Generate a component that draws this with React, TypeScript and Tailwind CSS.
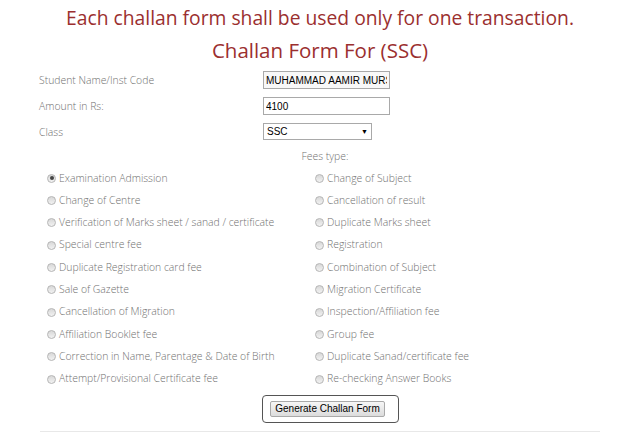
import React from "react";

const leftFees = [
  "Examination Admission",
  "Change of Centre",
  "Verification of Marks sheet / sanad / certificate",
  "Special centre fee",
  "Duplicate Registration card fee",
  "Sale of Gazette",
  "Cancellation of Migration",
  "Affiliation Booklet fee",
  "Correction in Name, Parentage & Date of Birth",
  "Attempt/Provisional Certificate fee",
];

const rightFees = [
  "Change of Subject",
  "Cancellation of result",
  "Duplicate Marks sheet",
  "Registration",
  "Combination of Subject",
  "Migration Certificate",
  "Inspection/Affiliation fee",
  "Group fee",
  "Duplicate Sanad/certificate fee",
  "Re-checking Answer Books",
];

const Radio: React.FC<{ checked?: boolean }> = ({ checked }) => (
  <span className="w-[9px] h-[9px] rounded-full border border-[#b5b5b5] bg-gradient-to-b from-[#d8d8d8] to-[#f2f2f2] flex items-center justify-center shrink-0">
    {checked && <span className="w-[4px] h-[4px] rounded-full bg-[#444]" />}
  </span>
);

const FeeItem: React.FC<{ label: string; checked?: boolean }> = ({ label, checked }) => (
  <div className="flex items-center gap-[3px] h-[22.3px]">
    <Radio checked={checked} />
    <span>{label}</span>
  </div>
);

export default function App() {
  return (
    <div className="w-[640px] h-[432px] bg-white overflow-hidden font-['Open_Sans',sans-serif]">
      <h1 className="text-center text-[#9b2f2f] text-[19.3px] leading-[24px] pt-[6px]">
        Each challan form shall be used only for one transaction.
      </h1>
      <h2 className="text-center text-[#9b2f2f] text-[20.5px] leading-[26px] mt-[7px]">
        Challan Form For (SSC)
      </h2>

      <div className="mx-[40px] text-[10.4px] text-[#707070] font-light">
        <div className="grid grid-cols-[224px_1fr] items-center mt-[8px] gap-y-[8px] -ml-[1px]">
          <span className="pt-[2px]">Student Name/Inst Code</span>
          <input
            readOnly
            value="MUHAMMAD AAMIR MURSHAD"
            className="w-[127px] h-[18px] border border-[#a9a9a9] bg-[#f8f8f8] px-[2px] text-[10px] text-black font-['Liberation_Sans',sans-serif] font-normal outline-none"
          />
          <span className="pt-[2px]">Amount in Rs:</span>
          <input
            readOnly
            value="4100"
            className="w-[127px] h-[18px] border border-[#a9a9a9] bg-white px-[2px] text-[10px] text-black font-['Liberation_Sans',sans-serif] font-normal outline-none"
          />
          <span className="pt-[2px]">Class</span>
          <div className="w-[109px] h-[17px] border border-[#a9a9a9] bg-white flex items-center justify-between px-[3px] text-[10px] text-black font-['Liberation_Sans',sans-serif] font-normal">
            <span>SSC</span>
            <span className="text-[7px]">▼</span>
          </div>
        </div>

        <div className="text-center mt-[8px] pl-[10px]">Fees type:</div>

        <div className="grid grid-cols-[268px_1fr] mt-[3px] pl-[7px]">
          <div className="flex flex-col">
            {leftFees.map((f, i) => (
              <FeeItem key={f} label={f} checked={i === 0} />
            ))}
          </div>
          <div className="flex flex-col">
            {rightFees.map((f) => (
              <FeeItem key={f} label={f} />
            ))}
          </div>
        </div>

        <div className="flex justify-center mt-[5px] pl-[21px]">
          <div className="border border-[#555] rounded-[4px] pl-[7px] pr-[13px] py-[5px]">
            <button className="border border-[#a9a9a9] bg-gradient-to-b from-[#f6f6f6] to-[#dcdcdc] px-[4px] h-[16px] leading-[14px] text-[10px] text-black font-['Liberation_Sans',sans-serif] font-normal rounded-[2px]">
              Generate Challan Form
            </button>
          </div>
        </div>

        <div className="border-t border-[#e8e8e8] mt-[8px]" />
      </div>
    </div>
  );
}
